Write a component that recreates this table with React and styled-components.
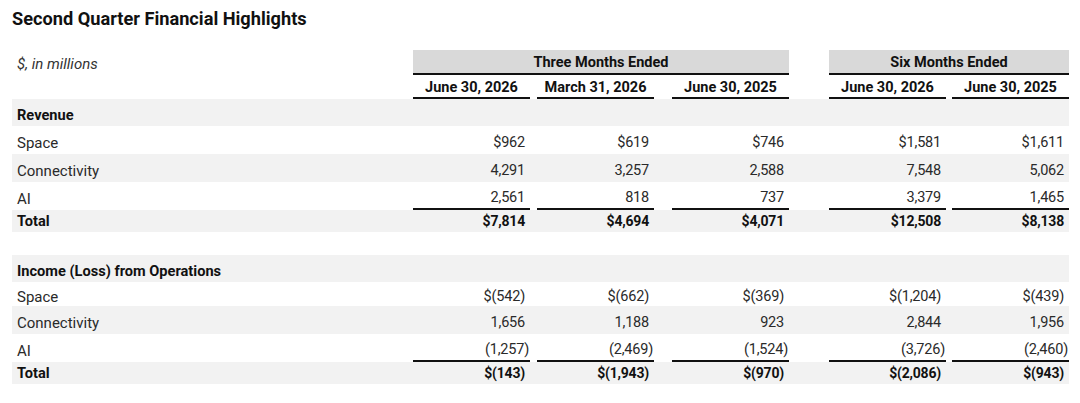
import React from 'react';
import styled, { createGlobalStyle } from 'styled-components';

// label column, then the five value tracks (cells sit at the right end of each track)
const COLS = '401px 117px 124px 135px 157px 123px';

const GlobalStyle = createGlobalStyle`
  html, body { margin: 0; background: #fff; }
  body {
    font-family: Roboto, "Liberation Sans", Arial, sans-serif;
    color: #222;
    -webkit-font-smoothing: antialiased;
  }
`;

const Page = styled.div`
  width: 1080px;
  box-sizing: border-box;
  padding: 8px 11px 0 12px;
`;

const Title = styled.h2`
  margin: 0 0 20px;
  font-size: 18.2px;
  line-height: 22px;
  font-weight: 700;
  color: #111;
`;

const Grid = styled.div`
  display: grid;
  grid-template-columns: ${COLS};
`;

const Units = styled.div`
  grid-column: 1;
  box-sizing: border-box;
  padding: 3px 0 0 5px;
  font-size: 15px;
  font-style: italic;
  color: #333;
  display: flex;
  align-items: center;
  height: 25px;
`;

const Band = styled.div`
  grid-column: ${(p) => p.$col};
  margin-left: ${(p) => p.$offset || 0}px;
  height: 25px;
  box-sizing: border-box;
  padding-top: 1px;
  background: #d9d9d9;
  border-bottom: 2px solid #111;
  display: flex;
  align-items: center;
  justify-content: center;
  font-size: 14.5px;
  font-weight: 700;
  color: #111;
`;

const SubHead = styled.div`
  justify-self: end;
  width: 117px;
  height: 24px;
  box-sizing: border-box;
  padding-top: 3px;
  border-bottom: 2px solid #111;
  display: flex;
  align-items: center;
  justify-content: center;
  font-size: 14.5px;
  font-weight: 700;
  color: #111;
`;

const Row = styled(Grid)`
  height: ${(p) => p.$h}px;
  box-sizing: border-box;
  padding-top: ${(p) => p.$top}px;
  background: ${(p) => (p.$shade ? '#f2f2f2' : '#fff')};
`;

const Label = styled.div`
  padding-left: 5px;
  display: flex;
  align-items: center;
  font-size: ${(p) => (p.$bold ? 14.6 : 15)}px;
  font-weight: ${(p) => (p.$bold ? 700 : 400)};
  color: ${(p) => (p.$bold ? '#111' : '#2a2a2a')};
`;

const Num = styled.div`
  justify-self: end;
  width: 117px;
  box-sizing: border-box;
  padding-right: ${(p) => (p.$hang ? 1 : 5)}px;
  display: flex;
  align-items: center;
  justify-content: flex-end;
  font-size: ${(p) => (p.$bold ? 14 : 14.5)}px;
  letter-spacing: -0.2px;
  font-weight: ${(p) => (p.$bold ? 700 : 400)};
  color: ${(p) => (p.$bold ? '#111' : '#2a2a2a')};
  border-bottom: ${(p) => (p.$rule ? '2px solid #111' : 'none')};
`;

const Gap = styled.div`
  height: 23px;
`;

const sections = [
  {
    title: 'Revenue',
    firstHeight: 28,
    rows: [
      ['Space', ['$962', '$619', '$746', '$1,581', '$1,611']],
      ['Connectivity', ['4,291', '3,257', '2,588', '7,548', '5,062']],
      ['AI', ['2,561', '818', '737', '3,379', '1,465']],
    ],
    total: ['$7,814', '$4,694', '$4,071', '$12,508', '$8,138'],
  },
  {
    title: 'Income (Loss) from Operations',
    firstHeight: 24,
    hangLast: true,
    rows: [
      ['Space', ['$(542)', '$(662)', '$(369)', '$(1,204)', '$(439)']],
      ['Connectivity', ['1,656', '1,188', '923', '2,844', '1,956']],
      ['AI', ['(1,257)', '(2,469)', '(1,524)', '(3,726)', '(2,460)']],
    ],
    total: ['$(143)', '$(1,943)', '$(970)', '$(2,086)', '$(943)'],
  },
];

const Section = ({ data }) => (
  <>
    <Row $h={27} $top={5} $shade>
      <Label $bold>{data.title}</Label>
    </Row>
    {data.rows.map(([name, values], i) => {
      const last = i === data.rows.length - 1;
      return (
        <Row key={name} $h={i === 0 ? data.firstHeight : 28} $top={5} $shade={i % 2 === 1}>
          <Label>{name}</Label>
          {values.map((v, j) => (
            <Num key={j} $rule={last} $hang={last && data.hangLast}>
              {v}
            </Num>
          ))}
        </Row>
      );
    })}
    <Row $h={22} $top={0} $shade>
      <Label $bold>Total</Label>
      {data.total.map((v, j) => (
        <Num key={j} $bold>
          {v}
        </Num>
      ))}
    </Row>
  </>
);

export default function App() {
  return (
    <Page>
      <GlobalStyle />
      <Title>Second Quarter Financial Highlights</Title>

      <Grid>
        <Units>$, in millions</Units>
        <Band $col="2 / span 3">Three Months Ended</Band>
        <Band $col="5 / span 2" $offset={40}>Six Months Ended</Band>
        <div />
        <SubHead>June 30, 2026</SubHead>
        <SubHead>March 31, 2026</SubHead>
        <SubHead>June 30, 2025</SubHead>
        <SubHead>June 30, 2026</SubHead>
        <SubHead>June 30, 2025</SubHead>
      </Grid>

      <Section data={sections[0]} />
      <Gap />
      <Section data={sections[1]} />
    </Page>
  );
}
